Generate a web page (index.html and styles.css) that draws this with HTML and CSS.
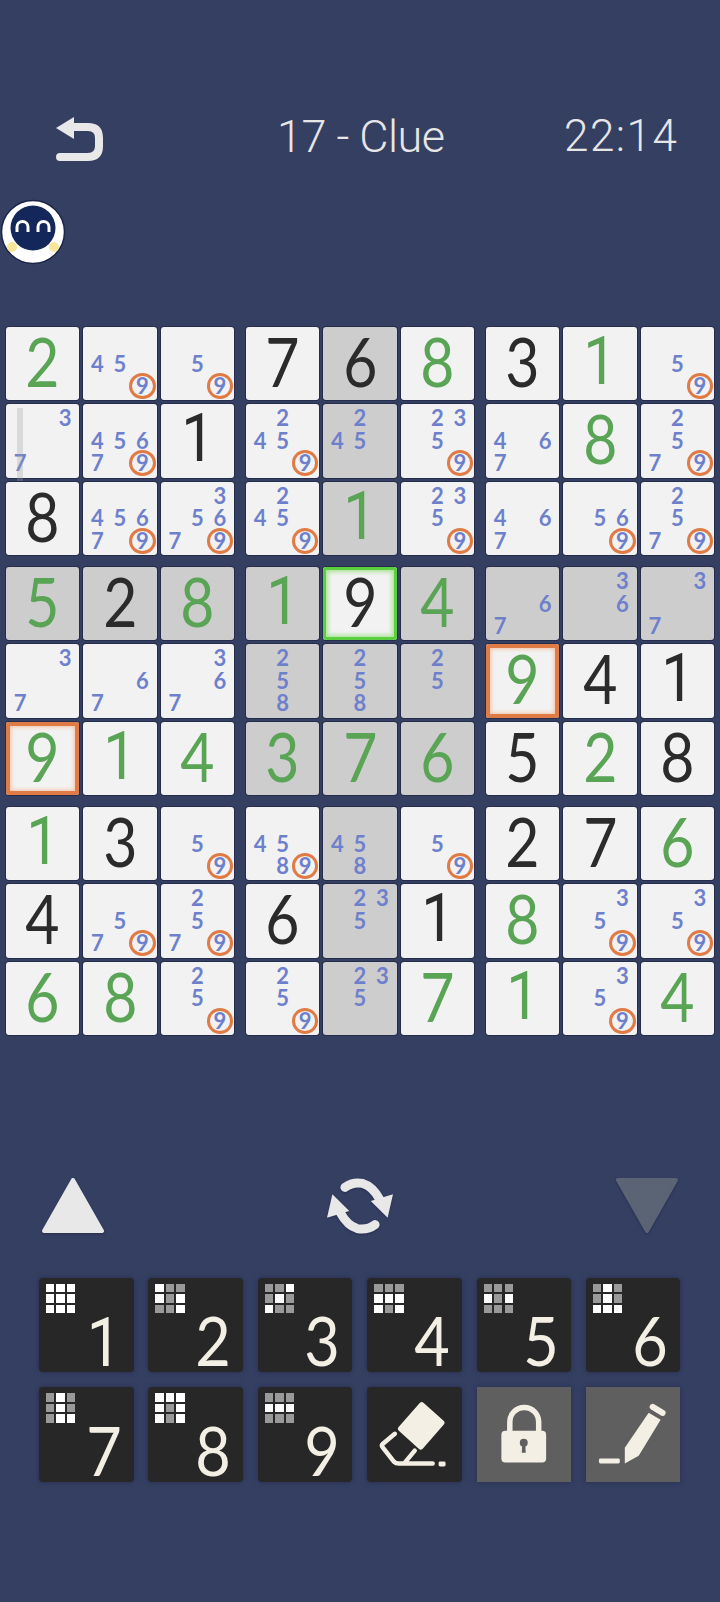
FILE: index.html
```html
<!DOCTYPE html>
<html lang="en">
<head>
  <meta charset="UTF-8" />
  <meta name="viewport" content="width=device-width, initial-scale=1.0"/>
  <title>Sudoku</title>
  <link rel="stylesheet" href="styles.css">
</head>
<body>

  <header class="top-bar">
    <svg class="back" viewBox="0 0 48 44"><path class="back-line" d="M14 10H32Q43 10 43 21V29Q43 40 32 40H4"/><path class="back-head" d="M0 11L18 0V22Z"/></svg>
    <div class="title">17 - Clue</div>
    <div class="clock">22:14</div>
  </header>

  <svg class="avatar" viewBox="0 0 66 66">
    <circle cx="33" cy="33" r="31.5" fill="#fff" stroke="#1c2547" stroke-width="1.5"/>
    <circle cx="12" cy="48" r="5" fill="#f8e79a"/>
    <circle cx="54" cy="48" r="5" fill="#f8e79a"/>
    <circle cx="33" cy="29" r="22.5" fill="#13275a"/>
    <path d="M17 33V28a5.500 5.500 0 0 1 11 0V33M38 33V28a5.500 5.500 0 0 1 11 0V33" fill="none" stroke="#fff" stroke-width="3"/>
  </svg>

  <div class="board">

    <div class="box">
      <div class="cell"><span class="big g">2</span></div>
      <div class="cell marks"><span class="m4">4</span><span class="m5">5</span><span class="m9 ring">9</span></div>
      <div class="cell marks"><span class="m5">5</span><span class="m9 ring">9</span></div>
      <div class="cell marks"><span class="m3">3</span><span class="m7">7</span><i class="scroll"></i></div>
      <div class="cell marks"><span class="m4">4</span><span class="m5">5</span><span class="m6">6</span><span class="m7">7</span><span class="m9 ring">9</span></div>
      <div class="cell"><span class="big one">1</span></div>
      <div class="cell"><span class="big">8</span></div>
      <div class="cell marks"><span class="m4">4</span><span class="m5">5</span><span class="m6">6</span><span class="m7">7</span><span class="m9 ring">9</span></div>
      <div class="cell marks"><span class="m3">3</span><span class="m5">5</span><span class="m6">6</span><span class="m7">7</span><span class="m9 ring">9</span></div>
    </div>

    <div class="box">
      <div class="cell"><span class="big">7</span></div>
      <div class="cell dim"><span class="big">6</span></div>
      <div class="cell"><span class="big g">8</span></div>
      <div class="cell marks"><span class="m2">2</span><span class="m4">4</span><span class="m5">5</span><span class="m9 ring">9</span></div>
      <div class="cell marks dim"><span class="m2">2</span><span class="m4">4</span><span class="m5">5</span></div>
      <div class="cell marks"><span class="m2">2</span><span class="m3">3</span><span class="m5">5</span><span class="m9 ring">9</span></div>
      <div class="cell marks"><span class="m2">2</span><span class="m4">4</span><span class="m5">5</span><span class="m9 ring">9</span></div>
      <div class="cell dim"><span class="big g one">1</span></div>
      <div class="cell marks"><span class="m2">2</span><span class="m3">3</span><span class="m5">5</span><span class="m9 ring">9</span></div>
    </div>

    <div class="box">
      <div class="cell"><span class="big">3</span></div>
      <div class="cell"><span class="big g one">1</span></div>
      <div class="cell marks"><span class="m5">5</span><span class="m9 ring">9</span></div>
      <div class="cell marks"><span class="m4">4</span><span class="m6">6</span><span class="m7">7</span></div>
      <div class="cell"><span class="big g">8</span></div>
      <div class="cell marks"><span class="m2">2</span><span class="m5">5</span><span class="m7">7</span><span class="m9 ring">9</span></div>
      <div class="cell marks"><span class="m4">4</span><span class="m6">6</span><span class="m7">7</span></div>
      <div class="cell marks"><span class="m5">5</span><span class="m6">6</span><span class="m9 ring">9</span></div>
      <div class="cell marks"><span class="m2">2</span><span class="m5">5</span><span class="m7">7</span><span class="m9 ring">9</span></div>
    </div>

    <div class="box">
      <div class="cell dim"><span class="big g">5</span></div>
      <div class="cell dim"><span class="big">2</span></div>
      <div class="cell dim"><span class="big g">8</span></div>
      <div class="cell marks"><span class="m3">3</span><span class="m7">7</span></div>
      <div class="cell marks"><span class="m6">6</span><span class="m7">7</span></div>
      <div class="cell marks"><span class="m3">3</span><span class="m6">6</span><span class="m7">7</span></div>
      <div class="cell clash"><span class="big g">9</span></div>
      <div class="cell"><span class="big g one">1</span></div>
      <div class="cell"><span class="big g">4</span></div>
    </div>

    <div class="box">
      <div class="cell dim"><span class="big g one">1</span></div>
      <div class="cell selected"><span class="big">9</span></div>
      <div class="cell dim"><span class="big g">4</span></div>
      <div class="cell marks dim"><span class="m2">2</span><span class="m5">5</span><span class="m8">8</span></div>
      <div class="cell marks dim"><span class="m2">2</span><span class="m5">5</span><span class="m8">8</span></div>
      <div class="cell marks dim"><span class="m2">2</span><span class="m5">5</span></div>
      <div class="cell dim"><span class="big g">3</span></div>
      <div class="cell dim"><span class="big g">7</span></div>
      <div class="cell dim"><span class="big g">6</span></div>
    </div>

    <div class="box">
      <div class="cell marks dim"><span class="m6">6</span><span class="m7">7</span></div>
      <div class="cell marks dim"><span class="m3">3</span><span class="m6">6</span></div>
      <div class="cell marks dim"><span class="m3">3</span><span class="m7">7</span></div>
      <div class="cell clash"><span class="big g">9</span></div>
      <div class="cell"><span class="big">4</span></div>
      <div class="cell"><span class="big one">1</span></div>
      <div class="cell"><span class="big">5</span></div>
      <div class="cell"><span class="big g">2</span></div>
      <div class="cell"><span class="big">8</span></div>
    </div>

    <div class="box">
      <div class="cell"><span class="big g one">1</span></div>
      <div class="cell"><span class="big">3</span></div>
      <div class="cell marks"><span class="m5">5</span><span class="m9 ring">9</span></div>
      <div class="cell"><span class="big">4</span></div>
      <div class="cell marks"><span class="m5">5</span><span class="m7">7</span><span class="m9 ring">9</span></div>
      <div class="cell marks"><span class="m2">2</span><span class="m5">5</span><span class="m7">7</span><span class="m9 ring">9</span></div>
      <div class="cell"><span class="big g">6</span></div>
      <div class="cell"><span class="big g">8</span></div>
      <div class="cell marks"><span class="m2">2</span><span class="m5">5</span><span class="m9 ring">9</span></div>
    </div>

    <div class="box">
      <div class="cell marks"><span class="m4">4</span><span class="m5">5</span><span class="m8">8</span><span class="m9 ring">9</span></div>
      <div class="cell marks dim"><span class="m4">4</span><span class="m5">5</span><span class="m8">8</span></div>
      <div class="cell marks"><span class="m5">5</span><span class="m9 ring">9</span></div>
      <div class="cell"><span class="big">6</span></div>
      <div class="cell marks dim"><span class="m2">2</span><span class="m3">3</span><span class="m5">5</span></div>
      <div class="cell"><span class="big one">1</span></div>
      <div class="cell marks"><span class="m2">2</span><span class="m5">5</span><span class="m9 ring">9</span></div>
      <div class="cell marks dim"><span class="m2">2</span><span class="m3">3</span><span class="m5">5</span></div>
      <div class="cell"><span class="big g">7</span></div>
    </div>

    <div class="box">
      <div class="cell"><span class="big">2</span></div>
      <div class="cell"><span class="big">7</span></div>
      <div class="cell"><span class="big g">6</span></div>
      <div class="cell"><span class="big g">8</span></div>
      <div class="cell marks"><span class="m3">3</span><span class="m5">5</span><span class="m9 ring">9</span></div>
      <div class="cell marks"><span class="m3">3</span><span class="m5">5</span><span class="m9 ring">9</span></div>
      <div class="cell"><span class="big g one">1</span></div>
      <div class="cell marks"><span class="m3">3</span><span class="m5">5</span><span class="m9 ring">9</span></div>
      <div class="cell"><span class="big g">4</span></div>
    </div>

  </div>

  <div class="controls">
    <svg class="ctl-up" viewBox="0 0 64 58"><path d="M32 3L61 54H3Z" fill="#e8e8e8" stroke="#e8e8e8" stroke-width="4" stroke-linejoin="round"/></svg>
    <svg class="ctl-swap" viewBox="0 0 66.400 57.400">
      <path d="M18 10Q26 4 36 6Q46 9 53 22" fill="none" stroke="#e8e8e8" stroke-width="9" stroke-linecap="round"/>
      <path d="M66.400 17L61 40.400L44 23.700Z" fill="#e8e8e8"/>
      <path d="M48.400 47.400Q40.400 53.400 30.400 51.400Q20.400 48.400 13.400 35.400" fill="none" stroke="#e8e8e8" stroke-width="9" stroke-linecap="round"/>
      <path d="M0 40.400L5.400 17L22.400 33.700Z" fill="#e8e8e8"/>
    </svg>
    <svg class="ctl-down" viewBox="0 0 64 58"><path d="M3 3H61L32 54Z" fill="#5a6475" stroke="#5a6475" stroke-width="4" stroke-linejoin="round"/></svg>
  </div>

  <div class="keypad">
    <div class="key"><div class="mini"><b></b><b></b><b></b><b></b><b></b><b></b><b></b><b></b><b></b></div><span class="one">1</span></div>
    <div class="key"><div class="mini"><b></b><u></u><u></u><b></b><u></u><b></b><u></u><u></u><b></b></div><span>2</span></div>
    <div class="key"><div class="mini"><u></u><u></u><b></b><u></u><b></b><u></u><b></b><u></u><u></u></div><span>3</span></div>
    <div class="key"><div class="mini"><u></u><u></u><u></u><b></b><b></b><b></b><b></b><u></u><b></b></div><span>4</span></div>
    <div class="key"><div class="mini"><u></u><u></u><u></u><b></b><u></u><b></b><u></u><u></u><u></u></div><span>5</span></div>
    <div class="key"><div class="mini"><u></u><b></b><u></u><u></u><b></b><u></u><b></b><b></b><b></b></div><span>6</span></div>
    <div class="key"><div class="mini"><u></u><b></b><u></u><u></u><b></b><u></u><u></u><b></b><b></b></div><span>7</span></div>
    <div class="key"><div class="mini"><b></b><b></b><b></b><b></b><u></u><b></b><b></b><u></u><b></b></div><span>8</span></div>
    <div class="key"><div class="mini"><u></u><u></u><u></u><b></b><b></b><b></b><u></u><u></u><u></u></div><span>9</span></div>
    <div class="key">
      <svg viewBox="0 0 95 95">
        <path d="M57 16L77 34Q79 36 77 38L56 62Q54 64 52 62L32 44Q30 42 32 40L53 16Q55 14 57 16Z" fill="#f3efe4"/>
        <path d="M28 47L16 57Q14 59 16 61L27 75Q29 77 32 77H66M48 64L38 76" fill="none" stroke="#f3efe4" stroke-width="4.500" stroke-linecap="round" stroke-linejoin="round"/>
        <rect x="72" y="75" width="7" height="5" rx="1.500" fill="#f3efe4"/>
      </svg>
    </div>
    <div class="key off">
      <svg viewBox="0 0 95 95">
        <path d="M33 46V35a14.500 14.500 0 0 1 29 0V46" fill="none" stroke="#f3efe4" stroke-width="5.500"/>
        <rect x="24.500" y="44" width="45" height="32" rx="4" fill="#f3efe4"/>
        <circle cx="47" cy="56" r="4" fill="#5f5f5f"/>
        <path d="M45.500 57H48.500L49 66H45Z" fill="#5f5f5f"/>
      </svg>
    </div>
    <div class="key off">
      <svg viewBox="0 0 95 95">
        <path d="M39 77V61L63 26L75 33L53 69Z" fill="#f3efe4"/>
        <path d="M67 20L77 26" fill="none" stroke="#f3efe4" stroke-width="6" stroke-linecap="round"/>
        <rect x="13" y="72" width="21" height="5" rx="1.500" fill="#f3efe4"/>
      </svg>
    </div>
  </div>

</body>
</html>
```

FILE: styles.css
```css
body {
  margin: 0;
  width: 720px;
  height: 1602px;
  overflow: hidden;
  background: #353f62;
  font-family: 'Lato', sans-serif;
  color: #2b2b2b;
}

.top-bar {
  display: flex;
  align-items: center;
  height: 44px;
  padding: 117px 0 0 56px;
  color: #e6e6e6;
}

.back {
  width: 48px;
  height: 44px;
}

.back-line {
  fill: none;
  stroke: #e8e8e8;
  stroke-width: 8;
  stroke-linecap: round;
}

.back-head {
  fill: #e8e8e8;
}

.title {
  margin: -6px 0 0 173px;
  width: 287px;
  font-family: 'Roboto', sans-serif;
  font-size: 45px;
  font-weight: 300;
  letter-spacing: -0.5px;
}

.clock {
  margin-top: -6px;
  font-family: 'Roboto', sans-serif;
  font-size: 44px;
  font-weight: 300;
  letter-spacing: 1.5px;
}

.avatar {
  display: block;
  width: 66px;
  height: 66px;
  margin: 38px 0 0 0;
}

.board {
  display: grid;
  grid-template-columns: repeat(3, 228px);
  gap: 12px;
  margin: 62px 0 0 6px;
}

.box {
  display: grid;
  grid-template-columns: repeat(3, 1fr);
  grid-auto-rows: 73.33px;
  gap: 4px;
}

.cell {
  position: relative;
  display: flex;
  justify-content: center;
  align-items: center;
  background: #f2f2f2;
  border-radius: 3px;
  box-shadow: 0 0 0 1px #252c4c;
}

.dim {
  background: #cdcdcd;
}

.big {
  display: inline-block;
  margin-top: -4px;
  font-size: 67px;
  line-height: 1;
  transform: scaleX(0.88);
}

.one {
  font-family: 'Roboto', sans-serif;
  font-weight: 400;
}

.g {
  color: #5aa455;
}

.marks {
  display: grid;
  grid-template-columns: repeat(3, 22.5px);
  grid-template-rows: repeat(3, 22.5px);
  justify-content: center;
  align-content: center;
}

.marks span {
  display: flex;
  justify-content: center;
  align-items: center;
  font-size: 22px;
  line-height: 22px;
  font-weight: 700;
  color: #6e80cc;
}

.m1 { grid-area: 1 / 1; }
.m2 { grid-area: 1 / 2; }
.m3 { grid-area: 1 / 3; }
.m4 { grid-area: 2 / 1; }
.m5 { grid-area: 2 / 2; }
.m6 { grid-area: 2 / 3; }
.m7 { grid-area: 3 / 1; }
.m8 { grid-area: 3 / 2; }
.m9 { grid-area: 3 / 3; }

.marks .ring {
  position: relative;
}

.ring::before {
  content: '';
  position: absolute;
  inset: -2px;
  border: 3px solid #e07b45;
  border-radius: 50%;
}

.selected {
  box-shadow: 0 0 0 1px #252c4c, inset 0 0 0 3px #5ccf3f, inset 0 0 4px 5px #a9e398;
}

.clash {
  box-shadow: 0 0 0 1px #252c4c, inset 0 0 0 4px #e07b45, inset 0 0 4px 5px #f2c3a8;
}

.scroll {
  position: absolute;
  left: 11px;
  top: 4px;
  width: 6px;
  height: 77px;
  background: rgba(160, 160, 170, 0.3);
}

.controls {
  display: flex;
  justify-content: space-between;
  align-items: center;
  height: 58px;
  margin-top: 142px;
  padding: 0 41px;
}

.controls svg {
  filter: drop-shadow(0 1px 1px #262e4e);
}

.ctl-up, .ctl-down {
  width: 64px;
  height: 58px;
}

.ctl-swap {
  width: 66px;
  height: 58px;
}

.keypad {
  display: grid;
  grid-template-columns: repeat(6, 94.5px);
  grid-auto-rows: 94.5px;
  gap: 15px 14.9px;
  margin: 43px 0 0 39px;
}

.key {
  position: relative;
  background: #272727;
  border-radius: 4px;
  box-shadow: 0 0 5px #262e4e;
}

.key svg {
  display: block;
  width: 100%;
  height: 100%;
}

.key span {
  position: absolute;
  right: 8px;
  bottom: 0;
  width: 44px;
  text-align: center;
  font-size: 68px;
  line-height: 64px;
  color: #f3efe4;
  transform: scaleX(0.9);
}

.key .one {
  line-height: 58px;
}

.off {
  background: #5f5f5f;
  border-radius: 0;
}

.mini {
  display: grid;
  grid-template-columns: repeat(3, 8.4px);
  grid-auto-rows: 8.4px;
  gap: 2.1px;
  padding: 6px 0 0 7px;
}

.mini b {
  background: #fff;
}

.mini u {
  background: #999;
}
```
